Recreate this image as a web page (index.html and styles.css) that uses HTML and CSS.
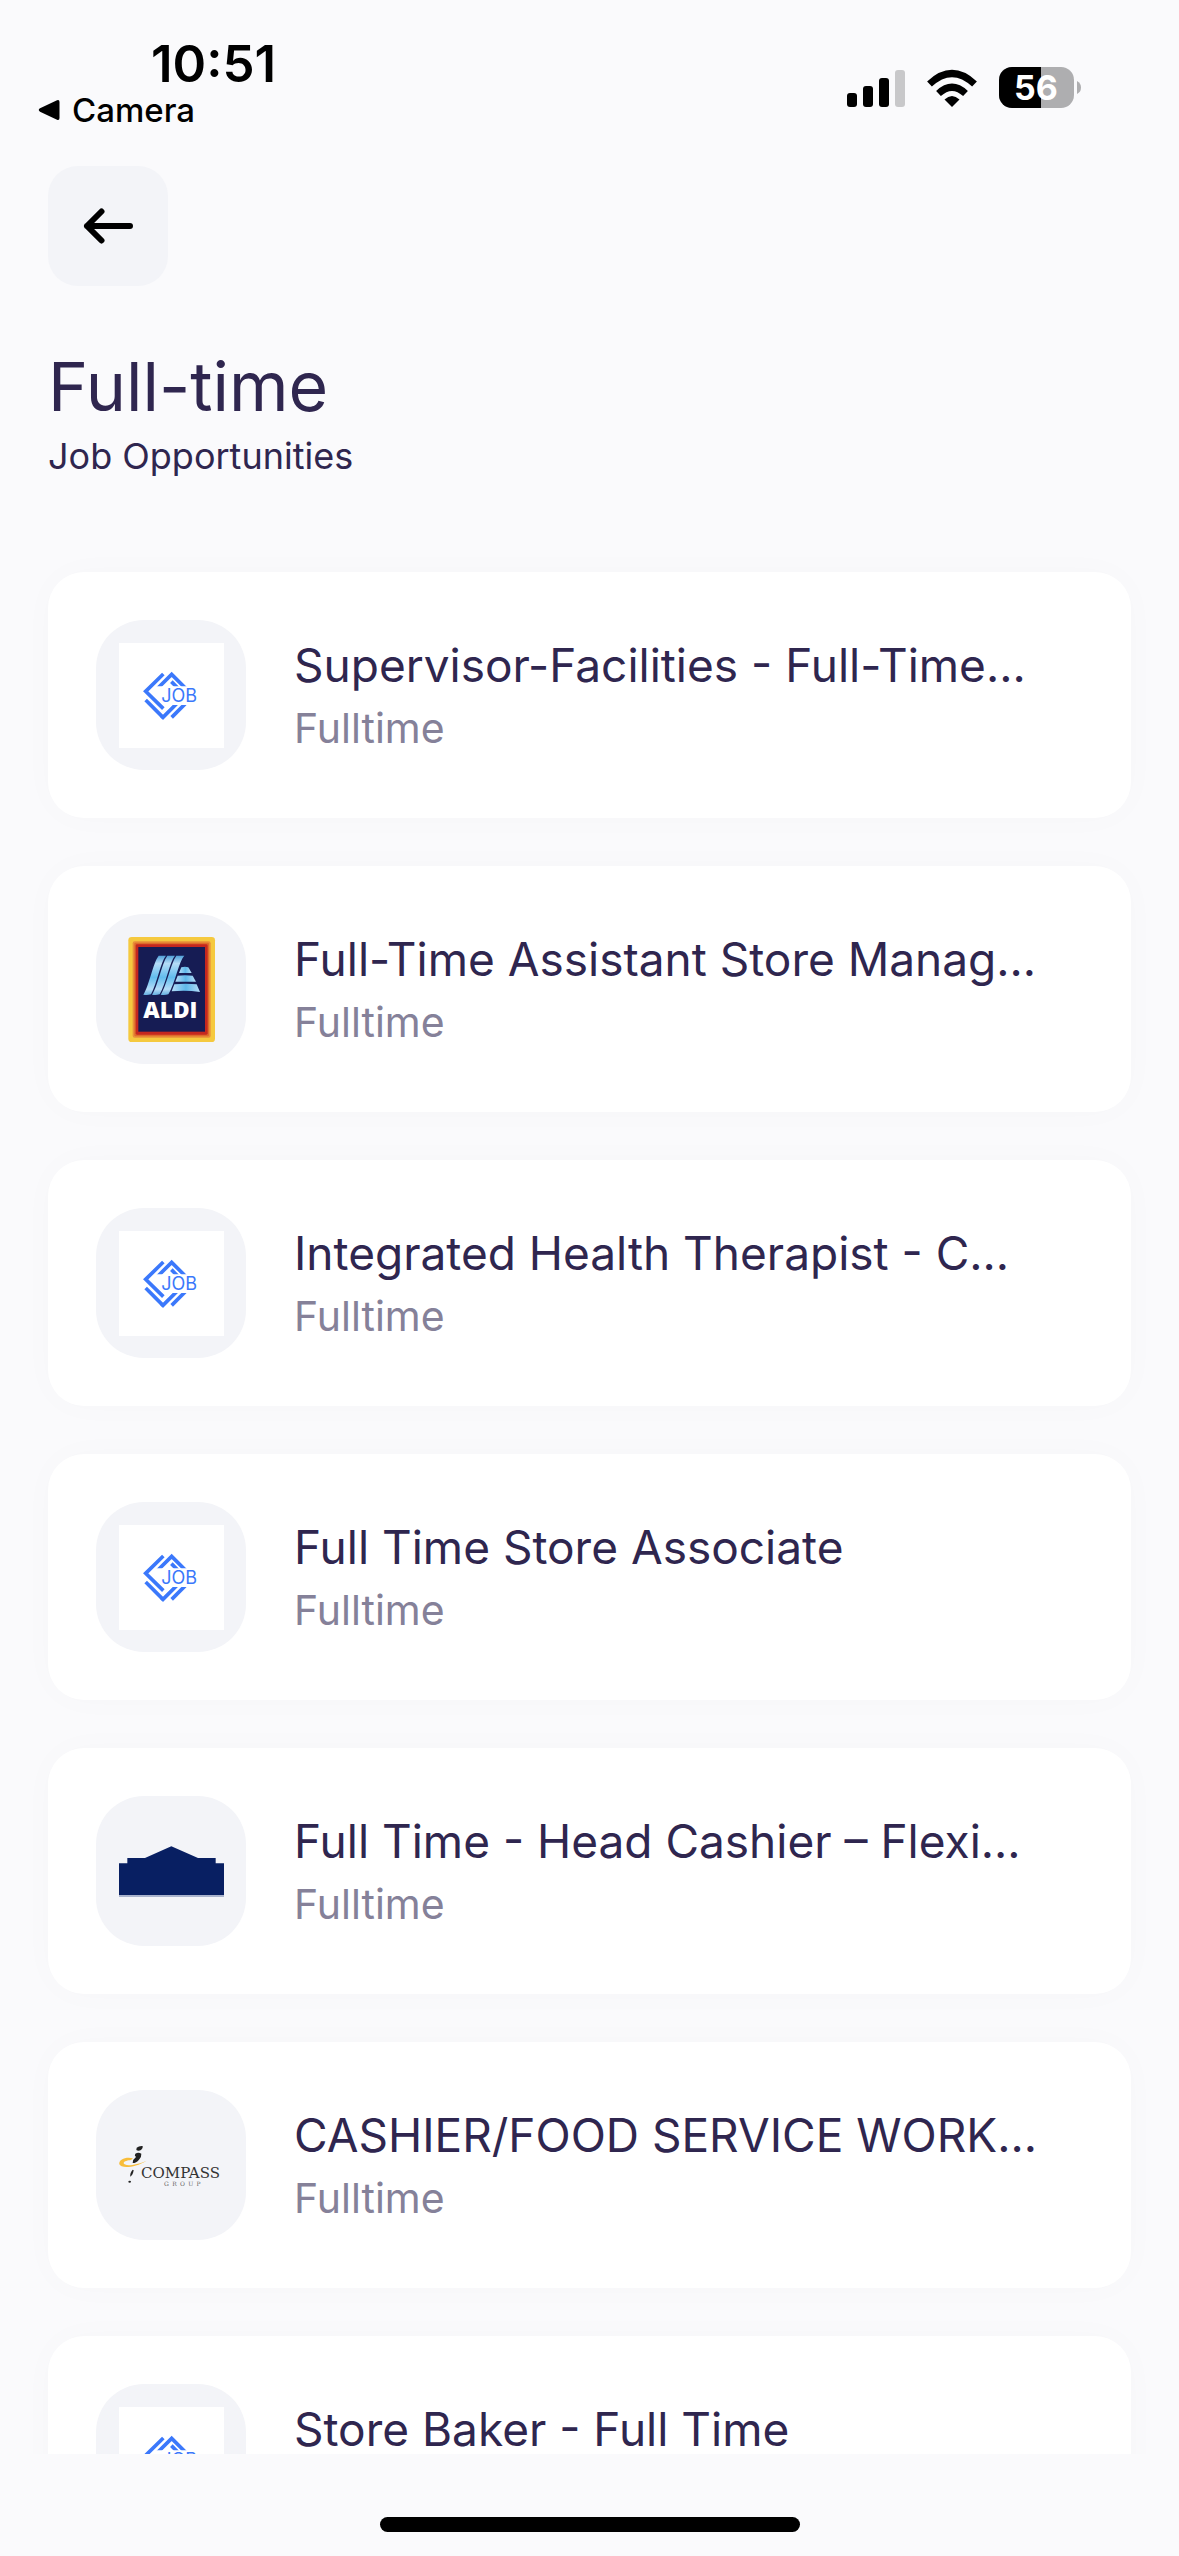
FILE: index.html
```html
<!DOCTYPE html>
<html lang="en">
<head>
<meta charset="utf-8">
<meta name="viewport" content="width=device-width, initial-scale=1">
<title>Full-time Job Opportunities</title>
<link rel="stylesheet" href="styles.css">
</head>
<body>
<svg class="sprite" aria-hidden="true">
  <defs>
    <clipPath id="job-top"><rect x="60" y="70" width="200" height="60"/></clipPath>
    <clipPath id="job-bottom"><rect x="60" y="186" width="200" height="60"/></clipPath>
    <linearGradient id="aldi-blue" x1="0" y1="0" x2="1" y2="0">
      <stop offset="0" stop-color="#b5dcf7"/><stop offset=".5" stop-color="#5fb8ea"/><stop offset="1" stop-color="#b5dcf7"/>
    </linearGradient>
    <linearGradient id="aldi-stripe" x1="0" y1="0" x2="0" y2="1">
      <stop offset="0" stop-color="#4f9fd8"/><stop offset=".2" stop-color="#b5dcf7"/><stop offset=".55" stop-color="#62bdee"/><stop offset=".85" stop-color="#b5dcf7"/><stop offset="1" stop-color="#63aee0"/>
    </linearGradient>
  </defs>
  <symbol id="mark-job" viewBox="0 0 315 315">
    <rect width="315" height="315" fill="#fff"/>
    <g fill="none" stroke="#3b78fb" stroke-width="11">
      <path d="M133 93 80 145 133 197"/>
      <path d="M80 171 132 223"/>
      <path d="M106 146 158 94 206 142" clip-path="url(#job-top)"/>
      <path d="M157 116 178 137" clip-path="url(#job-top)"/>
      <path d="M128 219 132 223 180 175" clip-path="url(#job-bottom)"/>
      <path d="M158 223 206 175" clip-path="url(#job-bottom)"/>
    </g>
  </symbol>
</svg>

<header class="status">
  <div class="status-left">
    <time class="clock">10:51</time>
    <a class="return" href="#">
      <svg class="return-icon" viewBox="0 0 22 22" aria-hidden="true"><path d="M2 9.300 19 1.300Q21.500.5 21.500 3V19Q21.500 21.500 19 20.700L2 12.700Q-.5 11 2 9.300Z"/></svg>
      <span>Camera</span>
    </a>
  </div>
  <div class="status-right">
    <svg class="signal" viewBox="0 0 58 40" role="img" aria-label="Signal">
      <rect y="25" width="10" height="14" rx="3"/><rect x="16" y="18" width="10" height="21" rx="3"/><rect x="32" y="10" width="10" height="29" rx="3"/><rect x="48" y="2" width="10" height="37" rx="3" fill="#c8c8ca"/>
    </svg>
    <svg class="wifi" viewBox="0 0 50 40" role="img" aria-label="Wi-Fi">
      <path d="M25 39 17.500 31.500Q25 24.500 32.500 31.500Z"/>
      <g fill="none" stroke="#000" stroke-width="7"><path d="M11.500 25.500Q25 13 38.500 25.500"/><path d="M2.500 16Q25-5 47.500 16"/></g>
    </svg>
    <svg class="battery" viewBox="0 0 82 42" role="img" aria-label="Battery 56%">
      <defs><clipPath id="cell"><rect width="75" height="41" rx="13"/></clipPath></defs>
      <g clip-path="url(#cell)"><path d="M0 0H75V41H0Z" fill="#aeaeb0"/><path d="M0 0H42V41H0Z"/></g>
      <path d="M78 14Q82 16 82 20.500T78 27Z" fill="#aeaeb0"/>
      <text class="battery-text" x="37" y="33">56</text>
    </svg>
  </div>
</header>

<div class="top">
  <button class="back" type="button" aria-label="Back">
    <svg class="back-icon" viewBox="0 0 50 36" fill="none" stroke="#000" stroke-width="6" stroke-linecap="round" stroke-linejoin="round" aria-hidden="true"><path d="M47 18H4M18.500 3.500 4 18 18.500 32.500"/></svg>
  </button>
  <h1 class="title">Full-time</h1>
  <p class="subtitle">Job Opportunities</p>
</div>

<main class="jobs">
  <a class="card" href="#">
    <span class="logo"><svg viewBox="0 0 315 315"><use href="#mark-job"/><text class="job-word" x="127" y="177">JOB</text></svg></span>
    <span class="info"><span class="name">Supervisor-Facilities - Full-Time...</span><span class="type">Fulltime</span></span>
  </a>
  <a class="card" href="#">
    <span class="logo"><svg viewBox="0 0 315 315">
      <rect x="28" width="260" height="315" rx="10" fill="#f5c93f"/>
      <rect x="41" y="13" width="234" height="289" rx="6" fill="#e9903a"/>
      <rect x="46" y="17" width="224" height="281" rx="4" fill="#de6b2b"/>
      <rect x="50" y="22" width="216" height="271" rx="4" fill="#c5271f"/>
      <rect x="58" y="30" width="200" height="254" fill="#161c54"/>
      <g fill="url(#aldi-stripe)">
        <path d="M119 56H141C126 72 114 140 96 172Q84 176 73 173C91 146 101 80 119 56Z"/>
        <path d="M145 56H168C153 72 141 140 122 172Q110 176 99 173C117 146 128 80 145 56Z"/>
        <path d="M172 56H196C180 72 168 140 148 172Q136 176 125 173C143 146 155 80 172 56Z"/>
      </g>
      <g fill="url(#aldi-blue)">
        <path d="M187 91Q198 88 208 91L218 108H180Z"/>
        <path d="M176 116Q198 113 221 116L231 134H169Z"/>
        <path d="M166 142Q200 139 233 142L243 165Q200 158 158 163Z"/>
      </g>
      <text class="aldi-word" x="73" y="243">ALDI</text>
    </svg></span>
    <span class="info"><span class="name">Full-Time Assistant Store Manag...</span><span class="type">Fulltime</span></span>
  </a>
  <a class="card" href="#">
    <span class="logo"><svg viewBox="0 0 315 315"><use href="#mark-job"/><text class="job-word" x="127" y="177">JOB</text></svg></span>
    <span class="info"><span class="name">Integrated Health Therapist - C...</span><span class="type">Fulltime</span></span>
  </a>
  <a class="card" href="#">
    <span class="logo"><svg viewBox="0 0 315 315"><use href="#mark-job"/><text class="job-word" x="127" y="177">JOB</text></svg></span>
    <span class="info"><span class="name">Full Time Store Associate</span><span class="type">Fulltime</span></span>
  </a>
  <a class="card" href="#">
    <span class="logo"><svg viewBox="0 0 315 315" aria-hidden="true">
      <path d="M0 228H315V234H0Z" fill="#a9b3cd"/>
      <path d="M0 133H25V117H78L157 82 237 117H290V133H315V228H0Z" fill="#081f62"/>
    </svg></span>
    <span class="info"><span class="name">Full Time - Head Cashier – Flexi...</span><span class="type">Fulltime</span></span>
  </a>
  <a class="card" href="#">
    <span class="logo"><svg viewBox="0 0 315 315">
      <path d="M42 136C18 130-2 142 1 154 5 166 46 166 83 143 50 158 16 160 14 151 14 144 28 142 36 141Z" fill="#f8bd3a"/>
      <g fill="#222">
        <path d="M53 104Q60 98 71 99 73 106 66 111 58 115 52 111Z"/>
        <path d="M49 122Q58 116 67 122 68 132 60 140 52 150 41 150 42 138 51 132 45 127 49 122Z"/>
        <path d="M41 170 44 172Q42 186 34 191 32 181 41 170Z"/>
        <ellipse cx="32" cy="206" rx="4" ry="3"/>
      </g>
      <text class="compass-word" x="66" y="194">COMPASS</text>
      <text class="compass-sub" x="135" y="219">GROUP</text>
    </svg></span>
    <span class="info"><span class="name">CASHIER/FOOD SERVICE WORK...</span><span class="type">Fulltime</span></span>
  </a>
  <a class="card" href="#">
    <span class="logo"><svg viewBox="0 0 315 315"><use href="#mark-job"/><text class="job-word" x="127" y="177">JOB</text></svg></span>
    <span class="info"><span class="name">Store Baker - Full Time</span><span class="type">Fulltime</span></span>
  </a>
</main>

<footer class="home"><span class="home-bar"></span></footer>
</body>
</html>
```
FILE: styles.css
```css
* {
  box-sizing: border-box;
}

body {
  margin: 0;
  height: 100vh;
  display: flex;
  flex-direction: column;
  background: #fafafc;
  color: #2f264f;
  font-family: Inter, "Liberation Sans", sans-serif;
}

a {
  color: inherit;
  text-decoration: none;
}

.sprite {
  position: absolute;
  width: 0;
  height: 0;
}

/* Status bar */
.status {
  display: flex;
  justify-content: space-between;
  align-items: flex-start;
  padding: 36px 98px 38px 38px;
  color: #000;
}

.status-left {
  display: flex;
  flex-direction: column;
}

.clock {
  padding-left: 113px;
  font-size: 51px;
  line-height: 56px;
  font-weight: 600;
}

.return {
  display: flex;
  align-items: center;
  gap: 12px;
  font-size: 33px;
  line-height: 36px;
  font-weight: 500;
}

.return-icon {
  width: 22px;
  height: 22px;
}

.status-right {
  display: flex;
  align-items: center;
  gap: 22px;
  padding-top: 31px;
}

.signal {
  width: 58px;
  height: 40px;
}

.wifi {
  width: 50px;
  height: 40px;
}

.battery {
  width: 82px;
  height: 42px;
}

.battery-text {
  fill: #fff;
  font-size: 34px;
  font-weight: 700;
  text-anchor: middle;
}

/* Page heading */
.top {
  padding: 0 48px;
}

.back {
  display: flex;
  align-items: center;
  justify-content: center;
  width: 120px;
  height: 120px;
  padding: 0;
  border: 0;
  border-radius: 30px;
  background: #f3f4f8;
}

.back-icon {
  width: 50px;
  height: 36px;
}

.title {
  margin: 58px 0 6px;
  font-size: 68px;
  line-height: 84px;
  font-weight: 400;
}

.subtitle {
  margin: 0;
  font-size: 36px;
  line-height: 44px;
}

/* Job list */
.jobs {
  flex: 1;
  min-height: 0;
  display: flex;
  flex-direction: column;
  gap: 48px;
  margin-top: 46px;
  padding: 48px;
  overflow-y: auto;
  scrollbar-width: none;
}

.card {
  flex: none;
  display: flex;
  align-items: center;
  gap: 48px;
  padding: 48px;
  border-radius: 36px;
  background: #fff;
  box-shadow: 0 0 36px rgba(47, 38, 79, 0.02);
}

.logo {
  flex: none;
  display: flex;
  align-items: center;
  justify-content: center;
  width: 150px;
  height: 150px;
  border-radius: 48px;
  background: #f3f4f8;
}

.logo svg {
  width: 105px;
  height: 105px;
}

.info {
  display: flex;
  flex-direction: column;
  gap: 10px;
  min-width: 0;
}

.name {
  font-size: 46px;
  line-height: 56px;
  white-space: nowrap;
}

.type {
  color: #858199;
  font-size: 41px;
  line-height: 50px;
}

.job-word {
  fill: #3b78fb;
  font-size: 54px;
}

.aldi-word {
  fill: #fff;
  font-family: "Open Sans", sans-serif;
  font-size: 68px;
  font-weight: 800;
}

.compass-word,
.compass-sub {
  fill: #333;
  font-family: "DejaVu Serif", serif;
  font-size: 45px;
}

.compass-sub {
  fill: #666;
  font-size: 18px;
  letter-spacing: 10px;
}

/* Home indicator */
.home {
  display: flex;
  justify-content: center;
  align-items: flex-end;
  height: 102px;
  padding-bottom: 24px;
}

.home-bar {
  width: 420px;
  height: 15px;
  border-radius: 8px;
  background: #000;
}
```
